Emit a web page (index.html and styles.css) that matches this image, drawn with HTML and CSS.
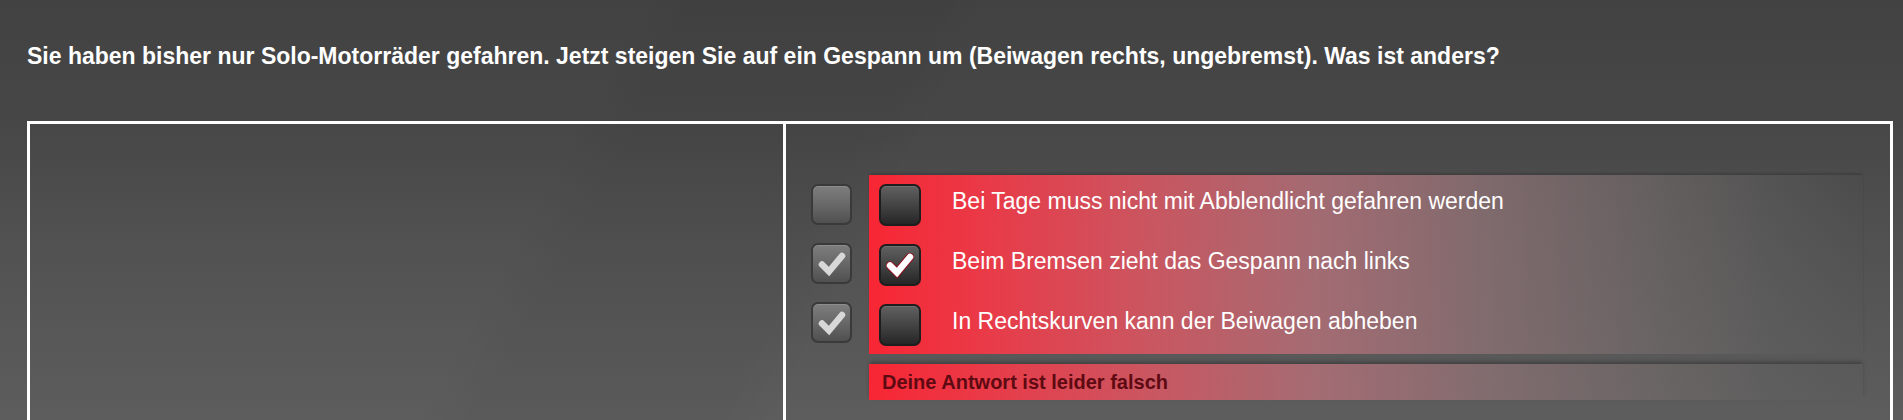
FILE: index.html
```html
<!DOCTYPE html>
<html lang="de">
<head>
<meta charset="utf-8">
<title>Frage</title>
<link rel="stylesheet" href="styles.css">
</head>
<body>
<div class="page">
  <h1 class="question">Sie haben bisher nur Solo-Motorräder gefahren. Jetzt steigen Sie auf ein Gespann um (Beiwagen rechts, ungebremst). Was ist anders?</h1>
  <div class="board">
    <div class="cell cell-left"></div>
    <div class="cell cell-right">
      <div class="answers">
        <div class="solution-col">
          <span class="box box-solution"></span>
          <span class="box box-solution"><svg class="tick" viewBox="0 0 42 42"><path d="M11 21.5 L18 28.5 L31 13" /></svg></span>
          <span class="box box-solution"><svg class="tick" viewBox="0 0 42 42"><path d="M11 21.5 L18 28.5 L31 13" /></svg></span>
        </div>
        <div class="panel-col">
          <div class="panel">
            <div class="row">
              <span class="box box-user"></span>
              <span class="label">Bei Tage muss nicht mit Abblendlicht gefahren werden</span>
            </div>
            <div class="row">
              <span class="box box-user"><svg class="tick tick-user" viewBox="0 0 42 42"><path class="outline" d="M11 21.5 L18 28.5 L31 13" /><path d="M11 21.5 L18 28.5 L31 13" /></svg></span>
              <span class="label">Beim Bremsen zieht das Gespann nach links</span>
            </div>
            <div class="row">
              <span class="box box-user"></span>
              <span class="label">In Rechtskurven kann der Beiwagen abheben</span>
            </div>
          </div>
          <div class="feedback">Deine Antwort ist leider falsch</div>
        </div>
      </div>
    </div>
  </div>
</div>
</body>
</html>
```
FILE: styles.css
```css
html, body {
  margin: 0;
  padding: 0;
}
body {
  height: 420px;
  overflow: hidden;
  background:
    linear-gradient(118deg, rgba(255,255,255,0) 30%, rgba(0,0,0,0.035) 33%, rgba(0,0,0,0.035) 44%, rgba(255,255,255,0) 47%),
    linear-gradient(to bottom, #424242 0%, #474747 30%, #525252 60%, #5d5d5d 100%);
  font-family: Arial, "Liberation Sans", sans-serif;
  color: #fff;
}
.page {
  padding: 0 10px 0 27px;
}
.question {
  margin: 0;
  padding-top: 43px;
  height: 121px;
  box-sizing: border-box;
  font-size: 23px;
  font-weight: bold;
  line-height: 26px;
  color: #fff;
}
.board {
  display: flex;
  width: 1866px;
  height: 302px;
  border: 3px solid #fff;
  border-bottom: 0;
  box-sizing: border-box;
}
.cell-left {
  width: 753px;
  border-right: 3px solid #fff;
}
.cell-right {
  flex: 1;
  padding: 51px 27px 0 25px;
}
.answers {
  display: flex;
}
.solution-col {
  display: flex;
  flex-direction: column;
  gap: 18px;
  padding-top: 9px;
  width: 58px;
}
.panel-col {
  flex: 1;
  display: flex;
  flex-direction: column;
  gap: 10px;
}
.panel {
  display: flex;
  flex-direction: column;
  gap: 18px;
  padding: 9px 0 8px 10px;
  background: linear-gradient(to right,
    rgba(248,38,52,1) 0%,
    rgba(236,58,72,0.98) 12%,
    rgba(208,86,97,0.95) 28%,
    rgba(172,110,118,0.9) 45%,
    rgba(138,112,115,0.82) 62%,
    rgba(118,108,108,0.62) 78%,
    rgba(100,100,100,0.28) 92%,
    rgba(90,90,90,0) 100%);
  box-shadow: 0 -2px 3px -1px rgba(0,0,0,0.25);
}
.row {
  display: flex;
  align-items: center;
  height: 42px;
}
.box {
  display: block;
  width: 42px;
  height: 42px;
  box-sizing: border-box;
  border-radius: 7px;
  flex: none;
  position: relative;
}
.box-solution {
  width: 41px;
  height: 41px;
  border: 2px solid #3a3a3a;
  background: linear-gradient(to bottom, #7e7e7e 0%, #686868 50%, #505050 100%);
  box-shadow: inset 0 1px 0 rgba(255,255,255,0.12);
}
.box-user {
  border: 2px solid #1e1e1e;
  background: linear-gradient(to bottom, #606060 0%, #444 50%, #262626 100%);
  box-shadow: inset 0 1px 0 rgba(255,255,255,0.1);
}
.tick {
  position: absolute;
  left: -2px;
  top: -2px;
  width: 42px;
  height: 42px;
}
.tick path {
  fill: none;
  stroke: #d8d8d8;
  stroke-width: 6.5;
  stroke-linecap: round;
  stroke-linejoin: miter;
}
.tick-user path {
  stroke: #fff;
}
.tick-user path.outline {
  stroke: #8a1420;
  stroke-width: 8.5;
}
.label {
  margin-left: 31px;
  padding-bottom: 8px;
  font-size: 23px;
  line-height: 26px;
  color: #fff;
}
.feedback {
  height: 36px;
  display: flex;
  align-items: center;
  padding-left: 13px;
  font-size: 20px;
  font-weight: bold;
  color: #5e0a12;
  background: linear-gradient(to right,
    rgba(248,38,52,1) 0%,
    rgba(236,58,72,0.98) 12%,
    rgba(208,86,97,0.95) 28%,
    rgba(172,110,118,0.9) 45%,
    rgba(138,112,115,0.82) 62%,
    rgba(118,108,108,0.62) 78%,
    rgba(100,100,100,0.28) 92%,
    rgba(90,90,90,0) 100%);
  box-shadow: 0 -3px 4px -1px rgba(0,0,0,0.3);
}
```
